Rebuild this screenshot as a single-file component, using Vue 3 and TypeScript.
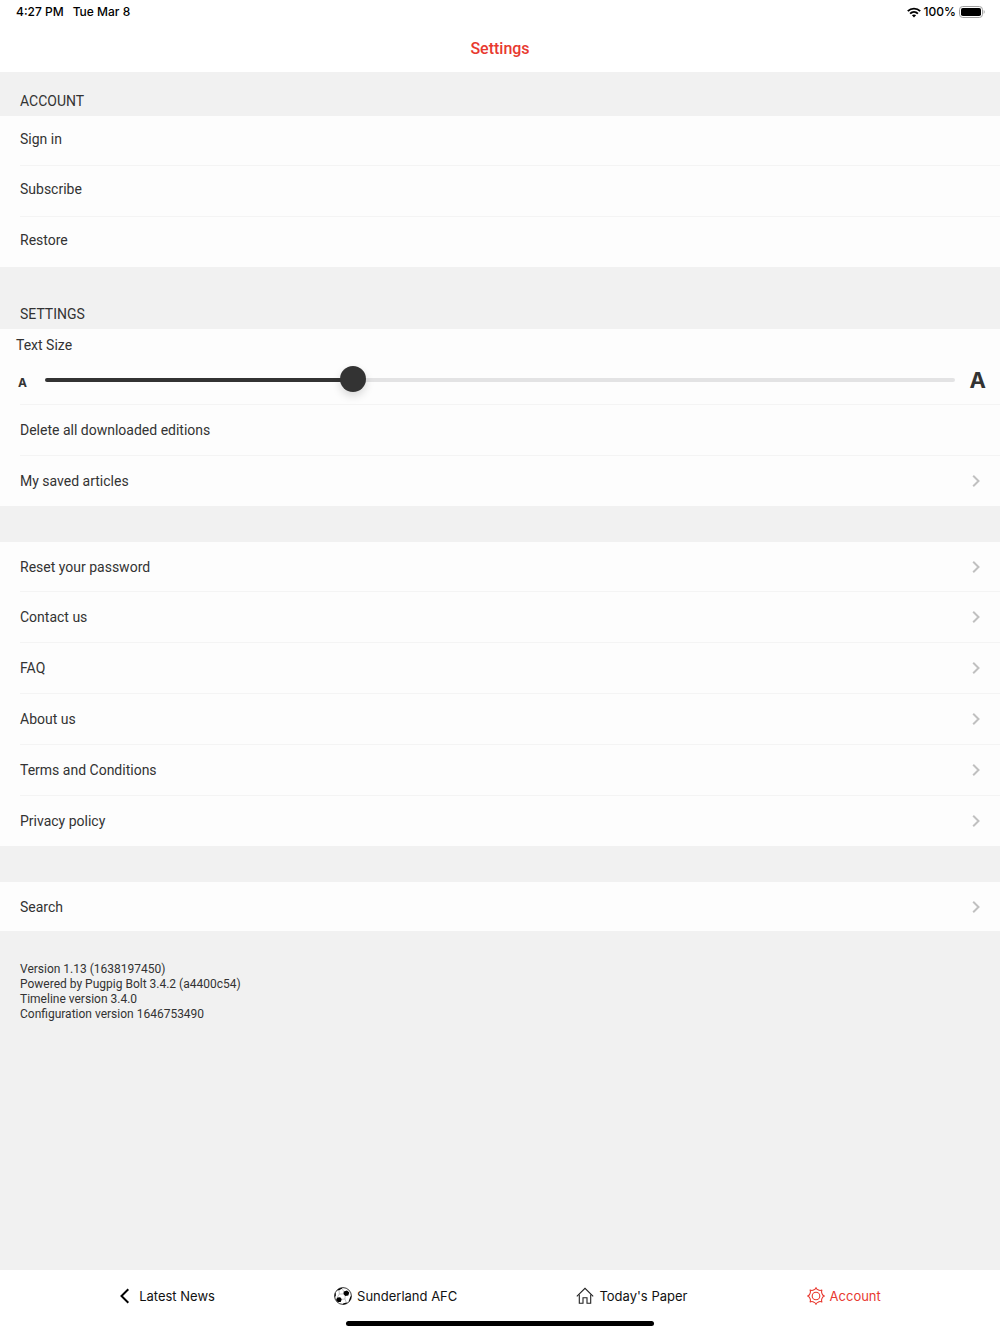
<script setup lang="ts">
import { computed, ref } from 'vue'

interface Row {
  label: string
  link?: boolean
}

const accountRows: Row[] = [{ label: 'Sign in' }, { label: 'Subscribe' }, { label: 'Restore' }]

const storageRows: Row[] = [
  { label: 'Delete all downloaded editions' },
  { label: 'My saved articles', link: true },
]

const linkGroups: Row[][] = [
  [
    { label: 'Reset your password', link: true },
    { label: 'Contact us', link: true },
    { label: 'FAQ', link: true },
    { label: 'About us', link: true },
    { label: 'Terms and Conditions', link: true },
    { label: 'Privacy policy', link: true },
  ],
  [{ label: 'Search', link: true }],
]

const versions: string[] = [
  'Version 1.13 (1638197450)',
  'Powered by Pugpig Bolt 3.4.2 (a4400c54)',
  'Timeline version 3.4.0',
  'Configuration version 1646753490',
]

const textSize = ref(2)
const fill = computed(() => `${((textSize.value - 1) / 3) * 100}%`)
</script>

<template>
  <div class="screen">
    <div class="status">
      <div class="status-side">
        <span>4:27 PM</span>
        <span>Tue Mar 8</span>
      </div>
      <div class="status-power">
        <svg width="14" height="11" viewBox="0 0 14 11" fill="none" stroke="#000" stroke-width="1.9" aria-hidden="true">
          <path d="M0.8 4.2C4.2 0.7 9.8 0.7 13.2 4.2" />
          <path d="M3.1 6.6C5.3 4.5 8.7 4.5 10.9 6.6" />
          <path d="M4.9 8.2C6.1 7.2 7.9 7.2 9.1 8.2L7 10.5Z" fill="#000" stroke="none" />
        </svg>
        <span>100%</span>
        <svg class="battery" width="26" height="12" viewBox="0 0 26 12" aria-hidden="true">
          <rect x="0.5" y="0.5" width="23" height="11" rx="3.2" fill="none" stroke="#a0a0a0" />
          <rect x="2" y="2" width="20" height="8" rx="1.8" fill="#000" />
          <path d="M24.7 4.1C26 4.6 26 7.4 24.7 7.9Z" fill="#a0a0a0" />
        </svg>
      </div>
    </div>

    <header class="title-bar">
      <h1>Settings</h1>
    </header>

    <main>
      <h2>Account</h2>
      <ul class="list raised">
        <li v-for="row in accountRows" :key="row.label">
          <button type="button" class="row">{{ row.label }}</button>
        </li>
      </ul>

      <h2 class="spaced">Settings</h2>
      <section class="text-size">
        <label for="text-size">Text Size</label>
        <div class="slider">
          <span class="small-a">A</span>
          <input
            id="text-size"
            v-model.number="textSize"
            type="range"
            min="1"
            max="4"
            step="1"
            :style="{ '--fill': fill }"
          />
          <span class="large-a">A</span>
        </div>
      </section>
      <ul class="list continued">
        <li v-for="row in storageRows" :key="row.label">
          <a v-if="row.link" href="#" class="row">
            {{ row.label }}
            <svg class="chevron" width="8" height="12" viewBox="0 0 8 12" aria-hidden="true">
              <path d="M1.2 0.8L6.5 6L1.2 11.2" />
            </svg>
          </a>
          <button v-else type="button" class="row">{{ row.label }}</button>
        </li>
      </ul>

      <ul v-for="(group, i) in linkGroups" :key="i" class="list separate">
        <li v-for="row in group" :key="row.label">
          <a href="#" class="row">
            {{ row.label }}
            <svg class="chevron" width="8" height="12" viewBox="0 0 8 12" aria-hidden="true">
              <path d="M1.2 0.8L6.5 6L1.2 11.2" />
            </svg>
          </a>
        </li>
      </ul>

      <div class="versions">
        <p v-for="line in versions" :key="line">{{ line }}</p>
      </div>
    </main>

    <footer>
      <nav>
        <a href="#" class="tab">
          <svg width="12" height="16" viewBox="0 0 12 16" fill="none" stroke="#000" stroke-width="2" aria-hidden="true">
            <path d="M9.3 1.2L2.5 8L9.3 14.8" />
          </svg>
          <span class="back-label">Latest News</span>
        </a>
        <a href="#" class="tab">
          <svg width="18" height="18" viewBox="0 0 18 18" aria-hidden="true">
            <circle cx="9" cy="9" r="8.4" fill="#fff" stroke="#222" stroke-width="0.9" />
            <path d="M9.8 4.6L13 3.4L15.3 5.5L14.3 8.5L11.2 8.9L9.4 6.9Z" />
            <path d="M3.2 10.6L6.2 10.2L7.8 12.3L6.7 14.9L3.8 15L2 12.9Z" />
            <path d="M4.6 1.8L7.8 0.7L8.2 1.6L5.1 3.2L3.2 3.4Z" />
            <path d="M0.7 6.8L1.7 6.1L1.8 8.6L0.8 10.5Z" />
            <path d="M16.5 9.5L17.3 9L16.9 12L15 14.8L14.8 13.7Z" />
            <path d="M9.1 16.5L12.4 15.6L13.5 15.9L11 17.2L8.9 17.4Z" />
            <path
              d="M8.2 1.6L9.8 4.6M9.4 6.9L5.3 7.1L3.2 10.6M5.3 7.1L5.1 3.2M11.2 8.9L10.9 12L7.8 12.3M10.9 12L12.4 15.6"
              fill="none"
              stroke="#888"
              stroke-width="0.5"
            />
          </svg>
          <span>Sunderland AFC</span>
        </a>
        <a href="#" class="tab">
          <svg width="18" height="18" viewBox="0 0 18 18" fill="none" stroke="#222" stroke-width="1.1" aria-hidden="true">
            <path d="M0.8 9.4L9 1.3L17.2 9.4" />
            <path d="M3.3 7.4V16.3H7V10.7H11V16.3H14.7V7.4" />
          </svg>
          <span>Today's Paper</span>
        </a>
        <a href="#" class="tab active" aria-current="page">
          <svg width="18" height="18" viewBox="0 0 18 18" fill="none" stroke="#e8392f" stroke-width="1.1" aria-hidden="true">
            <circle cx="9" cy="9" r="3.8" />
            <path
              d="M7 2.8Q8.4 2.4 9 0.6Q9.6 2.4 11 2.8Q12.8 3.9 14.9 3.1Q14.1 5.2 15.2 7Q15.6 8.4 17.4 9Q15.6 9.6 15.2 11Q14.1 12.8 14.9 14.9Q12.8 14.1 11 15.2Q9.6 15.6 9 17.4Q8.4 15.6 7 15.2Q5.2 14.1 3.1 14.9Q3.9 12.8 2.8 11Q2.4 9.6 0.6 9Q2.4 8.4 2.8 7Q3.9 5.2 3.1 3.1Q5.2 3.9 7 2.8Z"
              stroke-linejoin="round"
            />
          </svg>
          <span>Account</span>
        </a>
      </nav>
      <div class="home-bar"></div>
    </footer>
  </div>
</template>

<style>
body {
  margin: 0;
  background: #f1f1f1;
}
</style>

<style scoped>
.screen {
  display: flex;
  flex-direction: column;
  min-height: 100vh;
  background: #f1f1f1;
  color: #333;
  font: 14px/20px Roboto, 'Liberation Sans', sans-serif;
}

.status {
  display: flex;
  justify-content: space-between;
  height: 24px;
  padding: 0 15px 0 16px;
  background: #fff;
  color: #000;
  font: 500 12px/24px Inter, 'Liberation Sans', sans-serif;
}

.status-side {
  display: flex;
  gap: 9px;
}

.status-power {
  display: flex;
  align-items: center;
  gap: 3px;
}

.title-bar {
  height: 48px;
  background: #fff;
  text-align: center;
}

h1 {
  margin: 0;
  color: #e8392f;
  font-size: 16px;
  font-weight: 500;
  line-height: 50px;
}

main {
  flex: 1;
}

h2 {
  margin: 0;
  padding: 19px 20px 5px;
  font-size: 14px;
  font-weight: 400;
  line-height: 20px;
  text-transform: uppercase;
}

.spaced {
  margin-top: 18px;
}

.list {
  margin: 0;
  padding: 0;
  background: #fdfdfd;
  list-style: none;
}

.list li {
  margin-left: 20px;
}

.list li + li,
.continued li {
  border-top: 1px solid #f4f4f4;
}

.separate {
  margin-top: 36px;
}

.row {
  display: flex;
  align-items: center;
  justify-content: space-between;
  box-sizing: border-box;
  width: 100%;
  height: 50px;
  padding: 0 20px 0 0;
  border: 0;
  background: none;
  color: inherit;
  font: inherit;
  text-align: left;
  text-decoration: none;
}

.raised li:first-child .row,
.separate li:first-child .row {
  height: 49px;
}

.raised .row {
  padding-bottom: 4px;
}

.chevron {
  fill: none;
  stroke: #c0c0c0;
  stroke-width: 2;
}

.text-size {
  height: 75px;
  background: #fdfdfd;
}

.text-size label {
  display: block;
  padding: 6px 16px 0;
}

.slider {
  display: flex;
  align-items: center;
  height: 49px;
  padding: 0 14px 0 18px;
  font-family: Inter, 'Liberation Sans', sans-serif;
  font-weight: 700;
}

.small-a {
  width: 27px;
  padding-top: 6px;
  font-size: 12px;
}

.large-a {
  width: 31px;
  font-size: 22px;
  text-align: right;
}

input {
  flex: 1;
  min-width: 0;
  height: 26px;
  margin: 0;
  appearance: none;
  background: none;
}

input::-webkit-slider-runnable-track {
  height: 4px;
  border-radius: 2px;
  background: linear-gradient(to right, #333 var(--fill), #e3e3e4 var(--fill));
}

input::-webkit-slider-thumb {
  width: 26px;
  height: 26px;
  margin-top: -12px;
  appearance: none;
  border-radius: 50%;
  background: #333;
  box-shadow: 0 4px 8px rgba(0, 0, 0, 0.15);
}

.versions {
  padding: 31px 20px;
  font-size: 12px;
  line-height: 15px;
}

.versions p {
  margin: 0;
}

footer {
  background: #fff;
}

nav {
  display: flex;
  justify-content: space-evenly;
  height: 51px;
}

.tab {
  display: flex;
  align-items: center;
  gap: 5px;
  color: #111;
  font: 13px/18px Inter, 'Liberation Sans', sans-serif;
  text-decoration: none;
}

.back-label {
  padding-left: 3px;
}

.active {
  color: #e8392f;
}

.home-bar {
  width: 308px;
  height: 5px;
  margin: 0 auto 8px;
  border-radius: 3px;
  background: #000;
}
</style>
